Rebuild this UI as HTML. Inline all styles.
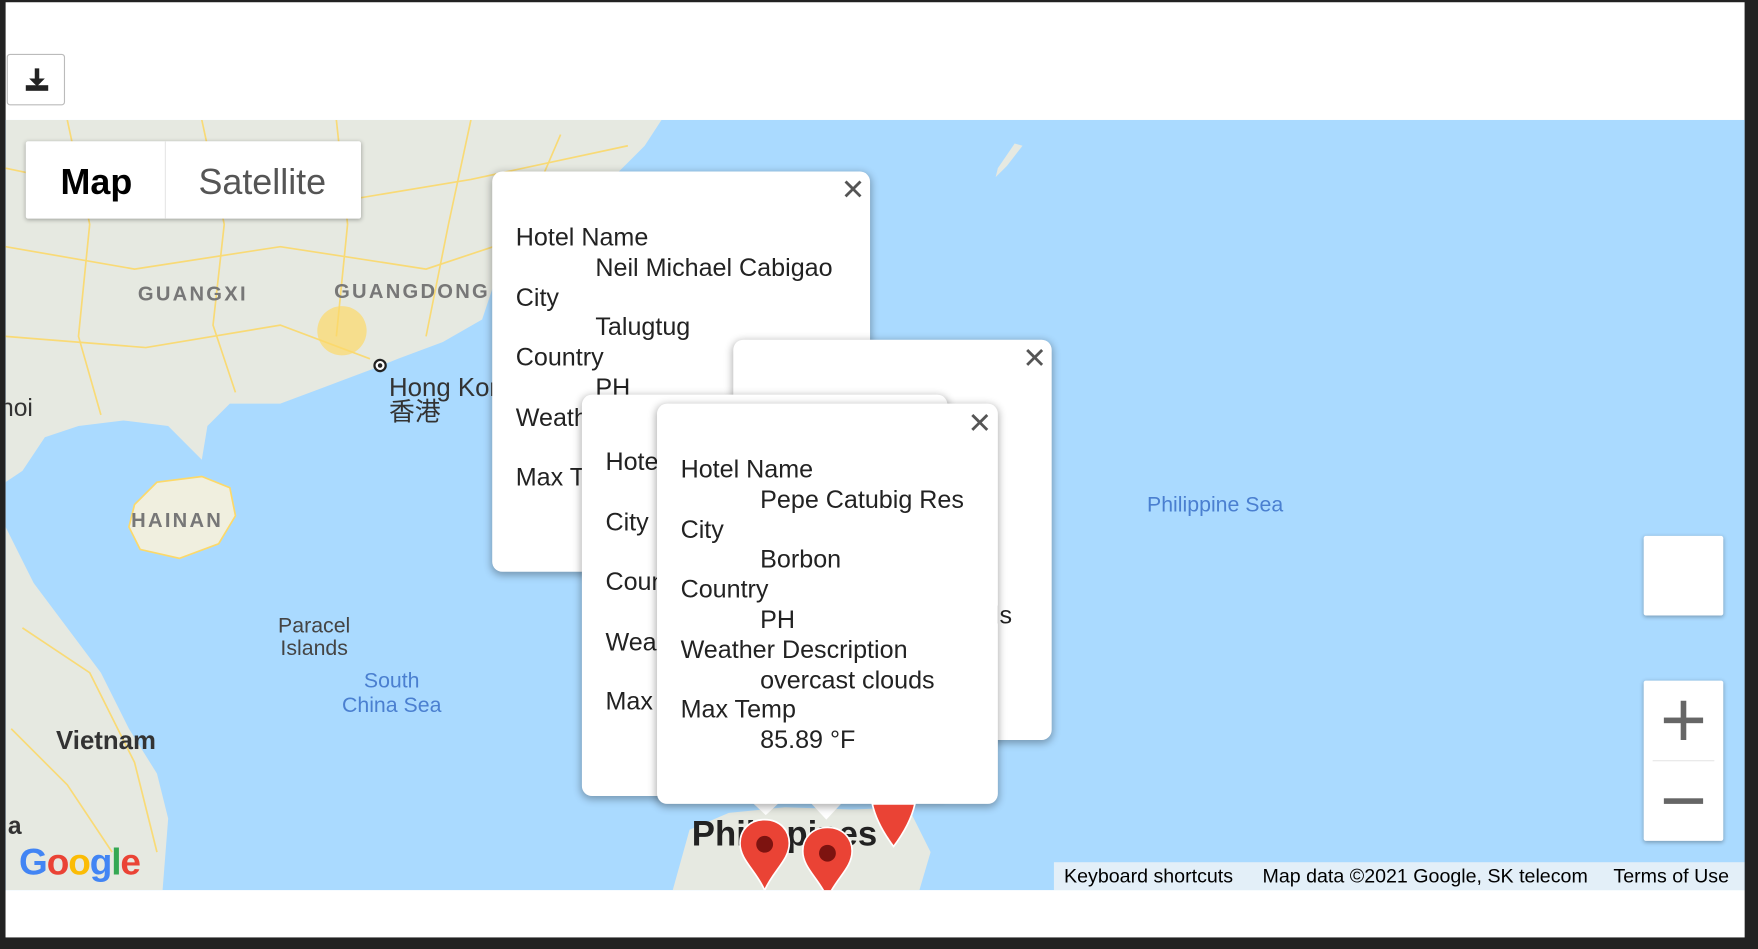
<!DOCTYPE html>
<html><head><meta charset="utf-8"><style>
html,body{margin:0;padding:0;background:#222;overflow:hidden;width:1758px;height:948px}
#s{position:absolute;left:0;top:0;width:1568px;height:846px;transform:scale(1.1212);transform-origin:0 0;font-family:"Liberation Sans","Noto Sans CJK SC",sans-serif}
.abs{position:absolute}
.pop{position:absolute;background:#fff;border-radius:9px;box-shadow:0 2px 7px 1px rgba(0,0,0,.3);overflow:hidden;font-size:22.4px;color:#222;line-height:26.8px}
.x{position:absolute;font-size:26px;color:#555;line-height:26px}
.t{position:absolute;white-space:nowrap}
</style></head><body><div id="s">
<div class="abs" style="left:5px;top:2px;width:1551px;height:834px;background:#fff"></div>
<div class="abs" style="left:6px;top:48px;width:50px;height:44px;border:1px solid #bbb;border-radius:3px;background:#fff">
<svg width="50" height="44" viewBox="0 0 50 44"><path d="M24 12h4v9h5l-7 7-7-7h5z" fill="#222"/><rect x="16" y="27" width="20" height="5" fill="#222"/></svg></div>
<div class="abs" style="left:5px;top:107px;width:1551px;height:687px;background:#aadaff;overflow:hidden">
<svg width="1551" height="687" viewBox="5 107 1551 687" style="position:absolute;left:0;top:0">
<path d="M5 107H590L575 130 545 160 510 180 470 200 445 240 430 285 395 305 355 320 330 330 290 345 250 360 205 360 185 380 180 410 165 395 150 380 110 375 70 380 40 390 20 420 5 430Z" fill="#e6e9e1"/>
<path d="M120 450 140 430 180 425 205 435 210 460 195 485 160 498 125 490 115 470Z" fill="#f0efdf" stroke="#fcd96a" stroke-width="1.5"/>
<path d="M5 470 30 520 60 560 90 600 115 650 140 690 150 730 145 794H5Z" fill="#e6e9e1"/>
<path d="M600 794 615 740 650 725 700 720 760 722 810 720 830 760 820 794Z" fill="#e6e9e1"/>
<path d="M890 150 905 128 912 130 898 148 888 158Z" fill="#e6e9e1"/>
<g fill="none" stroke="#fbd96b" stroke-width="1.5" opacity=".9">
<path d="M5 150 100 170 200 160 300 180 420 160 560 130"/><path d="M5 220 120 240 250 220 380 240 440 220"/><path d="M60 107 80 200 70 300 90 370"/><path d="M180 107 200 200 190 290 210 350"/><path d="M300 107 310 200 300 300"/><path d="M420 107 400 200 380 300"/><path d="M5 300 130 310 250 290 330 320"/><path d="M500 120 470 190 450 240"/><path d="M20 560 80 600 120 680 140 760"/><path d="M10 650 60 700 100 760"/>
</g>
<circle cx="305" cy="295" r="22" fill="#fcd96a" opacity=".7"/>
<circle cx="339" cy="326" r="5" fill="#fff" stroke="#222" stroke-width="2"/><circle cx="339" cy="326" r="2" fill="#222"/>
</svg>
<div class="t" style="left:118px;top:145px;font-size:18px;font-weight:bold;color:#777;letter-spacing:2px">GUANGXI</div>
<div class="t" style="left:293px;top:143px;font-size:18px;font-weight:bold;color:#777;letter-spacing:2px">GUANGDONG</div>
<div class="t" style="left:112px;top:347px;font-size:18px;font-weight:bold;color:#777;letter-spacing:2px">HAINAN</div>
<div class="t" style="left:342px;top:227px;font-size:23px;color:#333;line-height:22px">Hong Kong<br>香港</div>
<div class="t" style="left:-5px;top:244px;font-size:22px;color:#333">noi</div>
<div class="t" style="left:243px;top:442px;font-size:19px;color:#444;line-height:20px;text-align:center">Paracel<br>Islands</div>
<div class="t" style="left:300px;top:490px;font-size:19px;color:#4a7fd0;line-height:22px;text-align:center">South<br>China Sea</div>
<div class="t" style="left:45px;top:540px;font-size:23px;font-weight:bold;color:#333">Vietnam</div>
<div class="t" style="left:2px;top:617px;font-size:22px;font-weight:bold;color:#333">a</div>
<div class="t" style="left:1018px;top:333px;font-size:19px;color:#4a7fd0">Philippine Sea</div>
<div class="t" style="left:612px;top:619px;font-size:31px;font-weight:bold;color:#222">Philippines</div>
<div class="t" style="left:12px;top:643px;font-size:33px;font-weight:bold;letter-spacing:-1px"><span style="color:#4285f4">G</span><span style="color:#ea4335">o</span><span style="color:#fbbc05">o</span><span style="color:#4285f4">g</span><span style="color:#34a853">l</span><span style="color:#ea4335">e</span></div>
<div class="abs" style="left:18px;top:19px;width:299px;height:69px;background:#fff;box-shadow:0 1px 4px rgba(0,0,0,.3);border-radius:2px"></div>
<div class="abs" style="left:142px;top:19px;width:1px;height:69px;background:#e6e6e6"></div>
<div class="t" style="left:49px;top:37px;font-size:32px;font-weight:bold;color:#000">Map</div>
<div class="t" style="left:172px;top:37px;font-size:32px;color:#555">Satellite</div>
<div class="abs" style="left:1461px;top:371px;width:71px;height:71px;background:#fff;border-radius:2px;box-shadow:0 1px 4px rgba(0,0,0,.3)"></div>
<div class="abs" style="left:1461px;top:500px;width:71px;height:143px;background:#fff;border-radius:2px;box-shadow:0 1px 4px rgba(0,0,0,.3)">
<div class="abs" style="left:18px;top:33px;width:35px;height:5px;background:#666"></div><div class="abs" style="left:33px;top:18px;width:5px;height:35px;background:#666"></div>
<div class="abs" style="left:8px;top:71px;width:55px;height:1px;background:#e6e6e6"></div>
<div class="abs" style="left:18px;top:105px;width:35px;height:5px;background:#666"></div></div>
<div class="abs" style="left:935px;top:662px;width:616px;height:25px;background:rgba(245,245,245,.75)"></div>
<div class="t" style="left:944px;top:664px;font-size:17.5px;color:#000">Keyboard shortcuts</div>
<div class="t" style="left:1121px;top:664px;font-size:17.5px;color:#000">Map data ©2021 Google, SK telecom</div>
<div class="t" style="left:1434px;top:664px;font-size:17.5px;color:#000">Terms of Use</div>
</div>
<div class="pop" style="left:439px;top:153px;width:337px;height:357px"><div class="x" style="left:311px;top:3px">✕</div>
<div class="t" style="left:21px;top:46px">Hotel Name<br><span style="margin-left:71px">Neil Michael Cabigao</span><br>City<br><span style="margin-left:71px">Talugtug</span><br>Country<br><span style="margin-left:71px">PH</span><br>Weather Description<br><br>Max Temp</div></div>
<div class="pop" style="left:654px;top:303px;width:284px;height:357px"><div class="x" style="left:258px;top:3px">✕</div><div class="t" style="left:225px;top:233px">ds</div></div>
<div class="pop" style="left:519px;top:352px;width:326px;height:358px">
<div class="t" style="left:21px;top:33px;line-height:53.6px">Hotel Name<br>City<br>Country<br>Weather<br>Max Temp</div></div>
<svg class="abs" style="left:670px;top:715px" width="90" height="20"><path d="M0 0H26L13 12Z" fill="#fff"/><path d="M52 0H82L67 16Z" fill="#fff"/></svg>
<div class="pop" style="left:586px;top:360px;width:304px;height:357px"><div class="x" style="left:277px;top:4px">✕</div>
<div class="t" style="left:21px;top:46px">Hotel Name<br><span style="margin-left:71px">Pepe Catubig Res</span><br>City<br><span style="margin-left:71px">Borbon</span><br>Country<br><span style="margin-left:71px">PH</span><br>Weather Description<br><span style="margin-left:71px">overcast clouds</span><br>Max Temp<br><span style="margin-left:71px">85.89 °F</span></div></div>
<svg class="abs" style="left:650px;top:700px" width="170" height="94" viewBox="650 700 170 94">
<path d="M778 717H816Q812 735 797 755 782 735 778 717Z" fill="#ea4335" stroke="#fff" stroke-width="1.5"/>
<path d="M682 731c-14 0-22 10-22 21 0 15 14 24 22 42 8-18 22-27 22-42 0-11-8-21-22-21z" fill="#ea4335" stroke="#fff" stroke-width="1.5"/><circle cx="682" cy="753" r="7.5" fill="#7d1310"/>
<path d="M738 738c-14 0-22 10-22 21 0 15 14 24 22 42 8-18 22-27 22-42 0-11-8-21-22-21z" fill="#ea4335" stroke="#fff" stroke-width="1.5"/><circle cx="738" cy="761" r="7.5" fill="#7d1310"/>
</svg>
<div class="abs" style="left:5px;top:794px;width:1551px;height:42px;background:#fff"></div>
</div></body></html>
